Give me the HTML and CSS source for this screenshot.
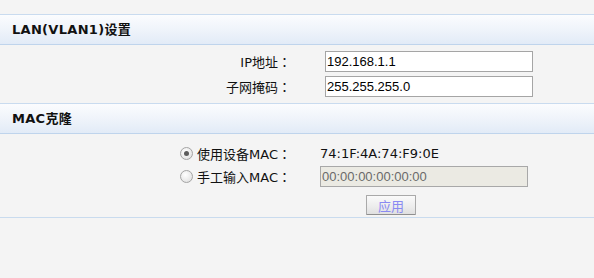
FILE: index.html
```html
<!DOCTYPE html>
<html>
<head>
    <meta charset="UTF-8">
    <title>LAN设置</title>
    <link rel="stylesheet" href="styles.css">
</head>
<body>
    <div class="page">
        <div class="section-head">LAN(VLAN1)设置</div>
        <div class="form lan-form">
            <div class="row">
                <label class="label" for="ip">IP地址<span class="colon">：</span></label>
                <input class="text-input" id="ip" type="text" value="192.168.1.1">
            </div>
            <div class="row">
                <label class="label" for="mask">子网掩码<span class="colon">：</span></label>
                <input class="text-input" id="mask" type="text" value="255.255.255.0">
            </div>
        </div>

        <div class="section-head">MAC克隆</div>
        <div class="form mac-form">
            <div class="row">
                <label class="label"><input class="radio" type="radio" name="mac" checked>使用设备MAC<span class="colon">：</span></label>
                <span class="value">74:1F:4A:74:F9:0E</span>
            </div>
            <div class="row">
                <label class="label"><input class="radio" type="radio" name="mac">手工输入MAC<span class="colon">：</span></label>
                <input class="text-input" type="text" value="00:00:00:00:00:00" disabled>
            </div>
            <div class="actions">
                <button class="btn" disabled>应用</button>
            </div>
        </div>
        <div class="divider"></div>
    </div>
</body>
</html>
```

FILE: styles.css
```css
body {
    margin: 0;
    padding: 0;
    background: #f4f4f4;
    font-family: "DejaVu Sans", "Noto Sans CJK SC", sans-serif;
    font-size: 13px;
    color: #111;
}

.page {
    padding-top: 14px;
}

.section-head {
    height: 29px;
    line-height: 29px;
    padding-left: 12px;
    border-top: 1px solid #c9dbef;
    border-bottom: 1px solid #bfd4ec;
    background: linear-gradient(to bottom, #fbfcfe 0%, #eef3fa 55%, #e2ebf7 100%);
    font-size: 13px;
    font-weight: bold;
    letter-spacing: 0.3px;
    color: #111;
}

.form {
    display: flex;
    flex-direction: column;
}

.lan-form {
    padding: 6px 0;
    gap: 4px;
}

.mac-form {
    padding: 9px 0 2px;
    gap: 2px;
}

.row {
    display: flex;
    align-items: center;
    height: 21px;
}

.label {
    width: 291px;
    flex: none;
    display: flex;
    align-items: center;
    justify-content: flex-end;
}

/* centred full-width colon, as on the device UI */
.colon {
    font-family: "Noto Sans CJK JP", "Noto Sans CJK SC", sans-serif;
}

.text-input {
    box-sizing: border-box;
    width: 208px;
    height: 21px;
    margin: 0;
    padding: 0 1px;
    border: 1px solid #a5a5a5;
    background: #fff;
    font-family: "Liberation Sans", Arial, sans-serif;
    font-size: 13px;
    color: #000;
    outline: none;
}

.lan-form .text-input {
    margin-left: 34px;
}

.mac-form .text-input,
.mac-form .value {
    margin-left: 29px;
}

.text-input:disabled {
    background: #ebeae3;
    color: #6a6a6a;
    border-color: #a8a8a8;
}

.radio {
    appearance: none;
    box-sizing: border-box;
    width: 13px;
    height: 13px;
    margin: 0 4px 0 0;
    border: 1px solid #a4a4a4;
    border-radius: 50%;
    background: radial-gradient(circle at 40% 35%, #ffffff 0%, #e6e6e6 70%, #d4d4d4 100%);
    position: relative;
}

.radio:checked::after {
    content: "";
    position: absolute;
    left: 3px;
    top: 3px;
    width: 5px;
    height: 5px;
    border-radius: 50%;
    background: #5c5c5c;
}

.value {
    color: #111;
}

.actions {
    display: flex;
    padding-left: 366px;
    margin-top: 6px;
}

.btn {
    box-sizing: border-box;
    width: 50px;
    height: 20px;
    padding: 0;
    border: 1px solid #a9a9a9;
    border-bottom-color: #8f8f8f;
    border-radius: 1px;
    background: linear-gradient(to bottom, #fafafa 0%, #ececec 60%, #e0e0e0 100%);
    font-family: "Noto Sans CJK SC", sans-serif;
    font-size: 13px;
    color: #8a8af2;
}

.divider {
    height: 1px;
    background: #c9dbee;
}
```
